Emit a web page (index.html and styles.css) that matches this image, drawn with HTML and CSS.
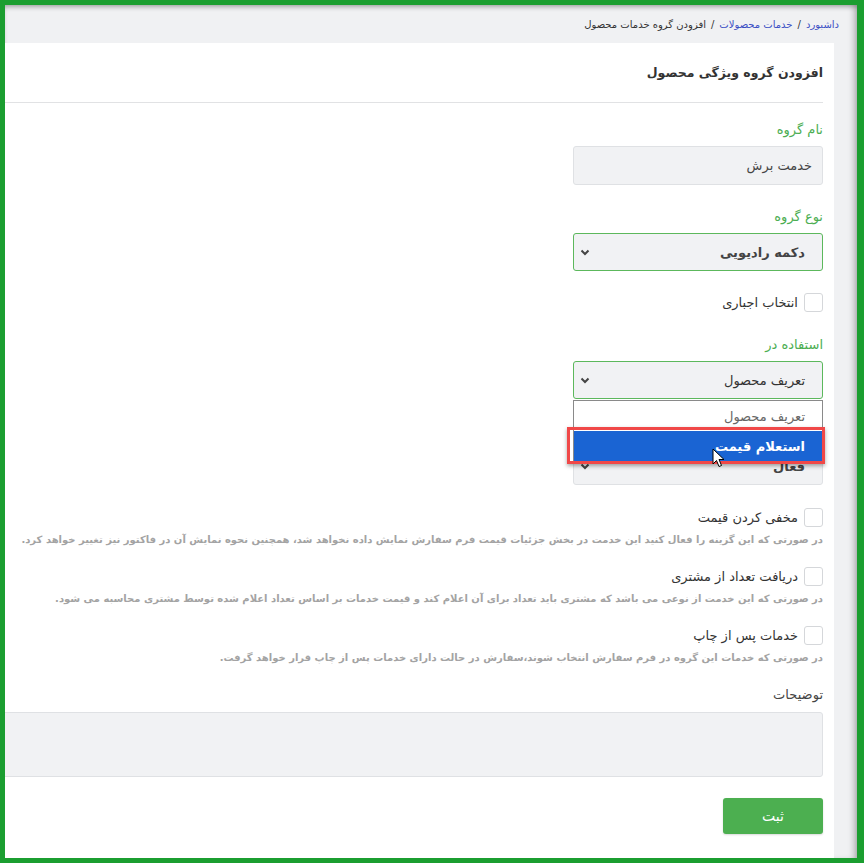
FILE: index.html
```html
<!DOCTYPE html>
<html lang="fa" dir="rtl">
<head>
    <meta charset="UTF-8">
    <meta name="viewport" content="width=device-width, initial-scale=1.0">
    <title>افزودن گروه خدمات محصول</title>
    <link rel="stylesheet" href="styles.css">
</head>
<body>
    <div class="screen">
        <div class="breadcrumb">
            <a href="#">داشبورد</a>
            <span class="sep">/</span>
            <a href="#">خدمات محصولات</a>
            <span class="sep">/</span>
            <span class="current">افزودن گروه خدمات محصول</span>
        </div>

        <div class="card">
            <div class="card-header">افزودن گروه ویژگی محصول</div>

            <div class="card-body">
                <div class="field">
                    <label class="field-label">نام گروه</label>
                    <div class="input">خدمت برش</div>
                </div>

                <div class="field">
                    <label class="field-label">نوع گروه</label>
                    <div class="select focused">
                        <span class="select-text">دکمه رادیویی</span>
                        <svg class="chevron" width="10" height="7" viewBox="0 0 10 7"><polyline points="1.5,1.5 5,5 8.5,1.5" fill="none" stroke="#444" stroke-width="2"/></svg>
                    </div>
                </div>

                <div class="check-row first">
                    <span class="check-box"></span>
                    <span class="check-label">انتخاب اجباری</span>
                </div>

                <div class="field used-in">
                    <label class="field-label">استفاده در</label>
                    <div class="select focused">
                        <span class="select-text light">تعریف محصول</span>
                        <svg class="chevron" width="10" height="7" viewBox="0 0 10 7"><polyline points="1.5,1.5 5,5 8.5,1.5" fill="none" stroke="#444" stroke-width="2"/></svg>
                    </div>

                    <div class="dropdown">
                        <div class="option">تعریف محصول</div>
                        <div class="option active">استعلام قیمت</div>
                    </div>
                    <div class="highlight"></div>
                    <svg class="cursor" width="13" height="20" viewBox="0 0 13 20">
                        <path d="M1 1 L1 16 L4.5 12.5 L7 18.5 L9.5 17.5 L7 11.5 L12 11.5 Z" fill="#fff" stroke="#000" stroke-width="1"/>
                    </svg>
                </div>

                <div class="field status">
                    <label class="field-label">وضعیت</label>
                    <div class="select">
                        <span class="select-text">فعال</span>
                        <svg class="chevron" width="10" height="7" viewBox="0 0 10 7"><polyline points="1.5,1.5 5,5 8.5,1.5" fill="none" stroke="#444" stroke-width="2"/></svg>
                    </div>
                </div>

                <div class="check-row">
                    <span class="check-box"></span>
                    <span class="check-label">مخفی کردن قیمت</span>
                </div>
                <p class="help">در صورتی که این گزینه را فعال کنید این خدمت در بخش جزئیات قیمت فرم سفارش نمایش داده نخواهد شد، همچنین نحوه نمایش آن در فاکتور نیز تغییر خواهد کرد.</p>

                <div class="check-row">
                    <span class="check-box"></span>
                    <span class="check-label">دریافت تعداد از مشتری</span>
                </div>
                <p class="help">در صورتی که این خدمت از نوعی می باشد که مشتری باید تعداد برای آن اعلام کند و قیمت خدمات بر اساس تعداد اعلام شده توسط مشتری محاسبه می شود.</p>

                <div class="check-row">
                    <span class="check-box"></span>
                    <span class="check-label">خدمات پس از چاپ</span>
                </div>
                <p class="help">در صورتی که خدمات این گروه در فرم سفارش انتخاب شوند،سفارش در حالت دارای خدمات پس از چاپ قرار خواهد گرفت.</p>

                <label class="desc-label">توضیحات</label>
                <div class="textarea"></div>

                <button class="submit-btn">ثبت</button>
            </div>
        </div>
    </div>
</body>
</html>
```

FILE: styles.css
```css
html, body {
    margin: 0;
    padding: 0;
}
body {
    font-family: "DejaVu Sans", "Noto Sans", sans-serif;
    color: #333;
    direction: rtl;
}
.screen {
    width: 864px;
    height: 863px;
    box-sizing: border-box;
    border: 5px solid #1b9e30;
    border-right-width: 7px;
    background-color: #f0f1f3;
    overflow: hidden;
    position: relative;
    box-shadow: inset 0 4px 5px -2px rgba(0, 0, 0, 0.3), inset -6px 0 6px -3px rgba(0, 0, 0, 0.25);
}
.breadcrumb {
    height: 38px;
    padding-right: 18px;
    display: flex;
    align-items: center;
    gap: 5px;
    font-size: 10px;
}
.breadcrumb a {
    color: #3b4fc4;
    text-decoration: none;
}
.breadcrumb .sep {
    color: #333;
}
.breadcrumb .current {
    color: #333;
}
.card {
    width: 1100px;
    margin-right: 23px;
    background-color: #fff;
    padding: 0 11px 40px 0;
    box-sizing: border-box;
    height: 900px;
}
.card-header {
    height: 59px;
    display: flex;
    align-items: center;
    font-size: 12.5px;
    font-weight: bold;
    color: #333;
    border-bottom: 1px solid #e1e2e4;
}
.card-body {
    padding-top: 17px;
}
.field {
    width: 250px;
    margin-bottom: 22px;
}
.field-label {
    display: block;
    font-size: 13px;
    line-height: 20px;
    color: #4cae52;
    margin-bottom: 6px;
}
.input,
.select {
    height: 39px;
    box-sizing: border-box;
    background-color: #f1f2f4;
    border: 1px solid #dfe1e4;
    border-radius: 3px;
    padding: 0 10px;
    display: flex;
    align-items: center;
    font-size: 13px;
    color: #444;
}
.select {
    height: 38px;
    padding: 0 17px 0 6px;
    justify-content: space-between;
}
.select.focused {
    border-color: #5cb85c;
}
.select-text {
    font-weight: bold;
    color: #444;
}
.select-text.light {
    font-weight: normal;
    color: #333;
}
.check-row {
    display: flex;
    align-items: center;
    gap: 6px;
    height: 19px;
}
.check-row.first {
    margin-bottom: 23px;
}
.check-box {
    width: 17px;
    height: 17px;
    border: 1px solid #d5d7da;
    border-radius: 3px;
    background-color: #fff;
}
.check-label {
    font-size: 13px;
    color: #333;
}
.help {
    margin: 5px 0 19px;
    font-size: 10px;
    line-height: 16px;
    color: #a3a3a3;
    font-weight: bold;
    white-space: nowrap;
}
.used-in {
    position: relative;
}
.status {
    margin-bottom: 23px;
}
.dropdown {
    position: absolute;
    top: 65px;
    right: 0;
    width: 250px;
    box-sizing: border-box;
    border: 1px solid #8a8a8a;
    border-bottom: none;
    background-color: #fff;
    z-index: 2;
}
.option {
    height: 30px;
    padding-right: 17px;
    display: flex;
    align-items: center;
    font-size: 13px;
    color: #666;
}
.option.active {
    background-color: #1a64d3;
    color: #fff;
    font-weight: bold;
}
.highlight {
    position: absolute;
    top: 92px;
    right: -2px;
    width: 258px;
    height: 37px;
    box-sizing: border-box;
    border: 3px solid #f04848;
    box-shadow: 0 2px 4px rgba(0, 0, 0, 0.35);
    z-index: 3;
}
.cursor {
    position: absolute;
    top: 113px;
    right: 98px;
    z-index: 4;
}
.desc-label {
    display: block;
    font-size: 13px;
    line-height: 20px;
    color: #444;
    margin-top: 18px;
    margin-bottom: 7px;
}
.textarea {
    height: 65px;
    box-sizing: border-box;
    background-color: #f1f2f4;
    border: 1px solid #dfe1e4;
    border-radius: 3px;
}
.submit-btn {
    display: block;
    margin-top: 21px;
    width: 100px;
    height: 36px;
    border: none;
    border-radius: 3px;
    background-color: #4caf50;
    color: #fff;
    font-family: inherit;
    font-size: 14px;
    box-shadow: 0 1px 2px rgba(0, 0, 0, 0.15);
}
```
